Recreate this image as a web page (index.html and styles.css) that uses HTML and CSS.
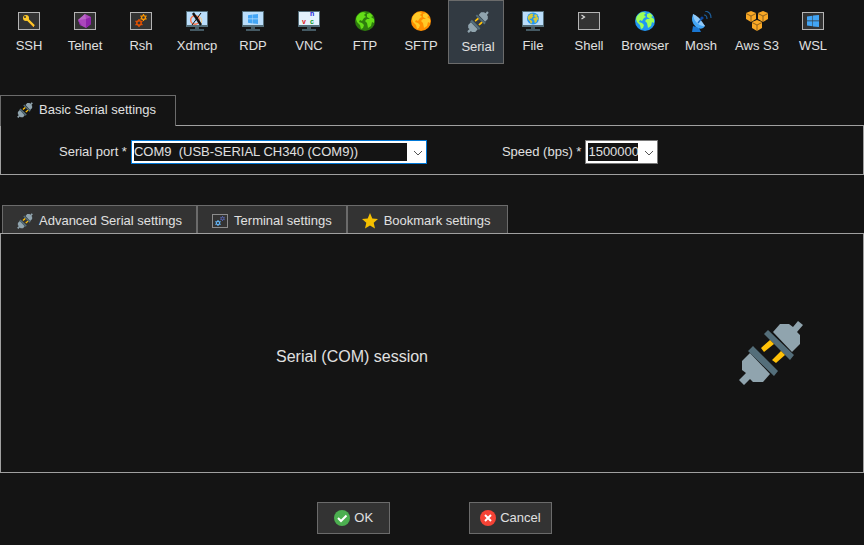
FILE: index.html
```html
<!DOCTYPE html>
<html lang="en">
<head>
<meta charset="utf-8">
<meta name="viewport" content="width=device-width, initial-scale=1">
<title>Session settings</title>
<link rel="stylesheet" href="styles.css">
</head>
<body>
<svg class="sprite" aria-hidden="true">
  <symbol id="plug" viewBox="0 0 64 65">
    <path fill="#90a4ae" d="M34 12L41 4H50L54 7L59 1L64 5L58 12L61 15V24L53 32ZM11 33L3 41V50L7 53L0 60L5 65L11 59L14 62H24L31 54Z"/>
    <path fill="#546e7a" d="M29 10L55 35L51 40L25 14ZM14 26L39 51L35 56L9 31Z"/>
    <path fill="#ffc107" d="M31 20L35 24L25 32L22 28ZM42 31L46 35L37 43L33 40Z"/>
  </symbol>
  <symbol id="box" viewBox="0 0 22 22">
    <rect x=".5" y="1.5" width="21" height="17" fill="#333" stroke="#b4b4b4"/>
  </symbol>
  <symbol id="monitor" viewBox="0 0 22 22">
    <path fill="#546e7a" d="M0 0H22V16H0Z"/>
    <path fill="#455a64" d="M9 16H13V18H18V20H4V18H9Z"/>
    <path fill="#bbdefb" d="M1 1H21V14H1Z"/>
  </symbol>
  <symbol id="land" viewBox="0 0 20 20">
    <path d="M2 5L5 2L8 1L11 2L9 4L11 6L9 7L7 10L5 9L4 11L7 12L9 14L8 17L6 18L5 14L2 11L1 8ZM12 3L15 2L18 5L16 6L19 8V12L17 11L16 15L13 17L12 12L10 10L12 8L15 8L12 6Z"/>
  </symbol>
  <symbol id="windows" viewBox="0 0 12 12">
    <path fill="#42a5f5" d="M0 1.5L5.5 .7V5.5H0ZM6 .6L12 0V5.5H6ZM0 6.2H5.5V11.3L0 10.5ZM6 6.2H12V12L6 11.4Z"/>
  </symbol>
  <symbol id="gear" viewBox="0 0 8 8">
    <circle cx="4" cy="4" r="2.2" fill="none" stroke="currentColor" stroke-width="1.5"/>
    <path stroke="currentColor" stroke-width="1.4" d="M4 0V1.5M4 6.5V8M.5 2L1.8 2.8M6.2 5.2L7.5 6M.5 6L1.8 5.2M6.2 2.8L7.5 2"/>
  </symbol>
  <symbol id="cube" viewBox="0 0 10 11">
    <path fill="#f9a825" d="M5 0L10 2V8L5 11L0 8V2Z"/>
    <path fill="none" stroke="#76501b" stroke-width=".8" d="M0 2.5L5 5L10 2.5M5 5V11"/>
  </symbol>
</svg>

<nav class="types" aria-label="Session type">
  <button class="type"><svg viewBox="0 0 22 22"><use href="#box"/><circle cx="8" cy="7" r="3" fill="#ffc928"/><circle cx="7" cy="6" r="1" fill="#333"/><path stroke="#ffc928" stroke-width="2.4" d="M9 8L16 15"/><path stroke="#f9a825" d="M12 12L14 14L16 16"/></svg>SSH</button>
  <button class="type"><svg viewBox="0 0 22 22"><use href="#box"/><path fill="#ab47bc" d="M11 3L17 6V13L12 17L6 14L4 9Z"/><path fill="#ba68c8" d="M11 3L4 9L12 8Z"/><path fill="#8e24aa" d="M12 8L17 6V13L12 17ZM4 9L8 15L6 14Z"/></svg>Telnet</button>
  <button class="type"><svg viewBox="0 0 22 22"><use href="#box"/><use class="gear-amber" href="#gear" x="10" y="3" width="7" height="7"/><use class="gear-orange" href="#gear" x="5" y="8" width="8" height="8"/></svg>Rsh</button>
  <button class="type"><svg viewBox="0 0 22 22"><use href="#monitor"/><circle cx="9" cy="9" r="4.3" fill="none" stroke="#ff7043" stroke-width="1.4"/><path fill="none" stroke="#ffcc80" d="M13 5Q18 9 14 14"/><path stroke="#111" stroke-width="2.4" d="M7 2L15 14"/><path stroke="#111" d="M15 2L6 14"/></svg>Xdmcp</button>
  <button class="type"><svg viewBox="0 0 22 22"><use href="#monitor"/><use href="#windows" x="6" y="3" width="10" height="10"/></svg>RDP</button>
  <button class="type"><svg viewBox="0 0 22 22"><use href="#monitor"/><path fill="#e3f2fd" d="M1 1H21V14H1Z"/><g class="vnc"><text x="4" y="13" fill="#e01818">v</text><text x="12" y="5" fill="#2020d8">n</text><text x="12" y="13" fill="#129a28">c</text></g></svg>VNC</button>
  <button class="type"><svg viewBox="0 0 22 22"><circle cx="11" cy="10" r="10" fill="#2e7d0e"/><use class="land-green" href="#land" x="1" y="0" width="20" height="20"/></svg>FTP</button>
  <button class="type"><svg viewBox="0 0 22 22"><circle cx="11" cy="10" r="10" fill="#ff8f00"/><use class="land-yellow" href="#land" x="1" y="0" width="20" height="20"/></svg>SFTP</button>
  <button class="type selected" aria-pressed="true"><svg viewBox="0 0 64 65"><use href="#plug"/></svg>Serial</button>
  <button class="type"><svg viewBox="0 0 22 22"><use href="#monitor"/><circle cx="11" cy="7.5" r="6" fill="#2196f3"/><use class="land-gold" href="#land" x="5" y="2" width="12" height="12"/></svg>File</button>
  <button class="type"><svg viewBox="0 0 22 22"><use href="#box"/><path fill="none" stroke="#ddd" stroke-width="1.2" d="M3.5 4L6.5 6L3.5 8"/></svg>Shell</button>
  <button class="type"><svg viewBox="0 0 22 22"><circle cx="11" cy="10" r="10" fill="#2196f3"/><use class="land-lime" href="#land" x="1" y="0" width="20" height="20"/></svg>Browser</button>
  <button class="type"><svg viewBox="0 0 22 22"><path fill="#1976d2" d="M3 15L9 17L11 21H2Z"/><path fill="#42a5f5" d="M3 3L15 15Q12 20 6 16Q0 11 3 3Z"/><path fill="#90caf9" d="M3 3Q8 4 15 15Q11 16 7 12Q3 8 3 3Z"/><path stroke="#1565c0" stroke-width="1.3" d="M8 12L12 7"/><circle cx="12" cy="7" r="1.6" fill="#0d47a1"/><path fill="none" stroke="#1e5f9c" stroke-width="1.2" d="M14 4Q17 4 17 8M15 0Q21 1 21 7"/></svg>Mosh</button>
  <button class="type"><svg viewBox="0 0 22 22"><use href="#cube" x="0" y="0" width="10" height="11"/><use href="#cube" x="12" y="0" width="10" height="11"/><use href="#cube" x="6" y="9" width="10" height="11"/></svg>Aws S3</button>
  <button class="type"><svg viewBox="0 0 22 22"><use href="#box"/><use href="#windows" x="5" y="4" width="12" height="12"/></svg>WSL</button>
</nav>

<main>
  <section class="group">
    <div class="tabs">
      <button class="tab current"><svg viewBox="0 0 64 65"><use href="#plug"/></svg>Basic Serial settings</button>
    </div>
    <form class="panel fields">
      <div class="field">
        <label for="port">Serial port *</label>
        <span class="combo focused port"><select id="port"><option>COM9&nbsp; (USB-SERIAL CH340 (COM9))</option></select><svg viewBox="0 0 10 6"><path d="M1 1L5 5L9 1"/></svg></span>
      </div>
      <div class="field">
        <label for="speed">Speed (bps) *</label>
        <span class="combo speed"><select id="speed"><option>1500000</option></select><svg viewBox="0 0 10 6"><path d="M1 1L5 5L9 1"/></svg></span>
      </div>
    </form>
  </section>

  <section class="group">
    <div class="tabs inset">
      <button class="tab"><svg viewBox="0 0 64 65"><use href="#plug"/></svg>Advanced Serial settings</button>
      <button class="tab"><svg viewBox="0 0 16 16"><rect x=".5" y="1.5" width="15" height="13" fill="#333" stroke="#8c8c8c"/><use class="gear-indigo" href="#gear" x="8" y="3" width="5" height="5"/><use class="gear-blue" href="#gear" x="3" y="7" width="6" height="6"/></svg>Terminal settings</button>
      <button class="tab"><svg viewBox="0 0 16 16"><path fill="#f5c000" d="M8 0L10.3 5.4L16 6L11.7 9.8L13 15.5L8 12.5L3 15.5L4.3 9.8L0 6L5.7 5.4Z"/></svg>Bookmark settings</button>
    </div>
    <div class="panel summary">
      <h1>Serial (COM) session</h1>
      <svg viewBox="0 0 64 65" aria-hidden="true"><use href="#plug"/></svg>
    </div>
  </section>
</main>

<footer class="actions">
  <button class="action ok"><svg viewBox="0 0 16 16"><circle cx="8" cy="8" r="8" fill="#4caf50"/><path fill="none" stroke="#fff" stroke-width="2" d="M4 8L7 11L12.5 5.5"/></svg>OK</button>
  <button class="action"><svg viewBox="0 0 16 16"><circle cx="8" cy="8" r="8" fill="#f44336"/><path stroke="#fff" stroke-width="2" d="M5 5L11 11M11 5L5 11"/></svg>Cancel</button>
</footer>
</body>
</html>
```
FILE: styles.css
```css
* {
  box-sizing: border-box;
}

body {
  margin: 0;
  background: #141414;
  color: #e0e0e0;
  font: 13px/16px "Liberation Sans", Arial, sans-serif;
}

button,
select {
  margin: 0;
  color: inherit;
  font: inherit;
}

svg {
  display: block;
  flex: none;
}

.sprite {
  position: absolute;
  width: 0;
  height: 0;
}

.types {
  display: flex;
}

.type {
  display: flex;
  flex-direction: column;
  align-items: center;
  gap: 5px;
  width: 56px;
  height: 64px;
  padding: 10px 0 0 2px;
  border: 1px solid transparent;
  background: none;
  white-space: nowrap;
}

.type svg {
  width: 22px;
  height: 22px;
}

.type.selected {
  padding-left: 4px;
  gap: 6px;
  border-color: #6b6b6b;
  background: #323a42;
}

.vnc {
  font: bold 7px "Liberation Sans", sans-serif;
}

.gear-amber { color: #ff9800; }
.gear-orange { color: #e65100; }
.gear-indigo { color: #5c6bc0; }
.gear-blue { color: #64b5f6; }
.land-green { fill: #64dd17; }
.land-yellow { fill: #ffca28; }
.land-gold { fill: #d4c83c; }
.land-lime { fill: #9cff57; }

.group {
  margin-top: 31px;
}

.group + .group {
  margin-top: 30px;
}

.tabs {
  display: flex;
}

.tabs.inset {
  padding-left: 2px;
}

.tab {
  display: flex;
  align-items: center;
  gap: 6px;
  height: 28px;
  padding: 2px 14px 0;
  border: 1px solid #6b6b6b;
  border-bottom: 0;
  background: #333;
  white-space: nowrap;
}

.tab:last-child {
  padding-right: 16px;
}

.tab svg {
  width: 16px;
  height: 16px;
}

.tab.current {
  position: relative;
  height: 31px;
  margin-bottom: -1px;
  padding: 0 19px 2px 16px;
  background: #141414;
}

.panel {
  border: 1px solid #a0a0a0;
}

.fields {
  display: flex;
  gap: 75px;
  padding: 14px 58px 10px;
}

.field {
  display: flex;
  align-items: center;
  gap: 4px;
  white-space: nowrap;
}

.combo {
  position: relative;
  height: 24px;
  border: 1px solid #7a7a7a;
}

.combo.focused {
  border-color: #0078d7;
}

.port {
  width: 296px;
}

.speed {
  width: 73px;
}

.combo select {
  display: block;
  width: 100%;
  height: 22px;
  padding: 0;
  border: 2px solid #fff;
  border-right-width: 19px;
  border-radius: 0;
  outline: 0;
  appearance: none;
  background: #141414;
}

.combo svg {
  position: absolute;
  top: 9px;
  right: 3px;
  width: 10px;
  height: 6px;
  fill: none;
  stroke: #555;
  pointer-events: none;
}

.summary {
  display: flex;
  align-items: center;
  min-height: 240px;
  padding: 0 60px 2px 0;
}

.summary h1 {
  flex: 1;
  margin: 0;
  padding: 10px 36px 0 0;
  font-size: 16px;
  font-weight: 400;
  line-height: 20px;
  text-align: center;
}

.summary h1 + svg {
  width: 64px;
  height: 65px;
}

.actions {
  display: flex;
  justify-content: center;
  gap: 79px;
  padding: 29px 0 11px 5px;
}

.action {
  display: flex;
  align-items: center;
  gap: 4px;
  height: 32px;
  padding: 0 10px;
  border: 1px solid #6b6b6b;
  background: #333;
}

.action.ok {
  padding: 0 16px;
}

.action svg {
  width: 16px;
  height: 16px;
}
```
